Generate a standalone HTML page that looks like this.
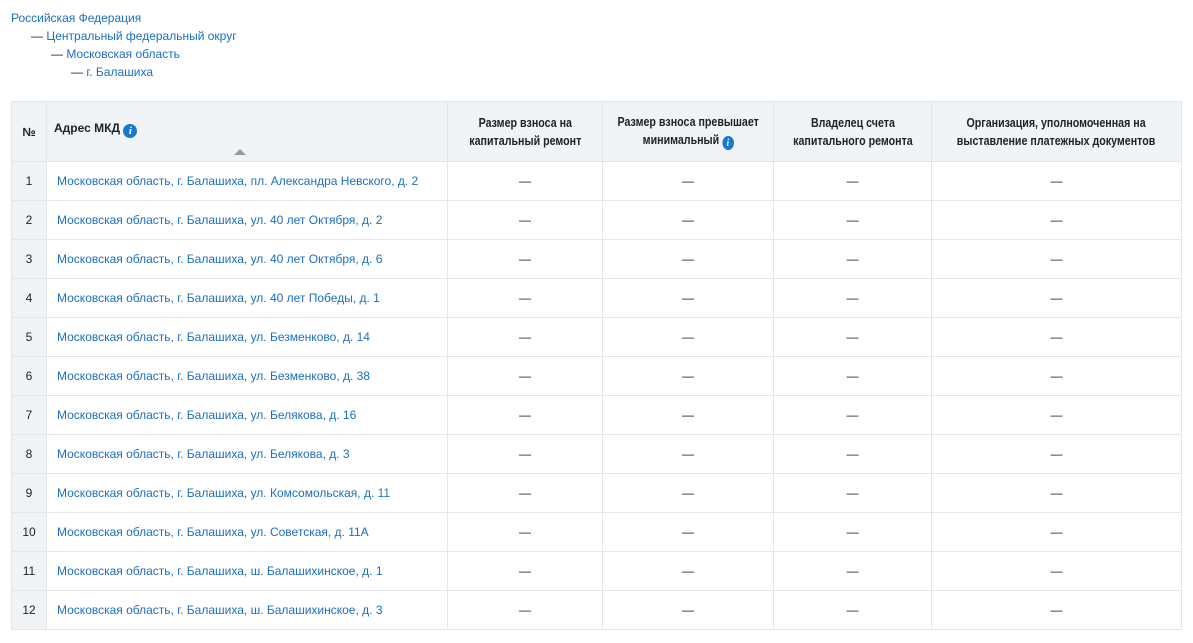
<!DOCTYPE html>
<html><head><meta charset="utf-8"><style>
body{margin:0;background:#fff;font-family:"Liberation Sans",sans-serif;font-size:12px;color:#222}
a{color:#1b6fc2;text-decoration:none}
.tree{position:absolute;left:11px;top:9px;line-height:18px}
.tree div span{color:#222}
table{position:absolute;left:11px;top:101px;border-collapse:collapse;table-layout:fixed;width:1170px}
td,th{border:1px solid #e3e7eb;padding:0}
th{background:#f1f4f7;height:59px;font-size:12px;font-weight:bold;line-height:18px;text-align:center;color:#222;overflow:hidden}
th .h{height:59px;display:flex;align-items:center;justify-content:center;white-space:nowrap}
th .h span.t{display:inline-block;font-size:13px;transform:scaleX(0.82);transform-origin:center}
td{height:38px;text-align:center}
td.n{background:#f1f4f7}
td.a{text-align:left;padding-left:10px}
.i{display:inline-block;width:14px;height:14px;border-radius:50%;background:#1b78d0;color:#fff;font:italic bold 11px/14px "Liberation Serif",serif;text-align:center;vertical-align:-2px}
.tri{position:absolute;left:187px;top:47px;width:0;height:0;border-left:6px solid transparent;border-right:6px solid transparent;border-bottom:6px solid #999}
</style></head><body>
<div class="tree">
<div><a>Российская Федерация</a></div>
<div style="padding-left:20px"><span>— </span><a>Центральный федеральный округ</a></div>
<div style="padding-left:40px"><span>— </span><a>Московская область</a></div>
<div style="padding-left:60px"><span>— </span><a>г. Балашиха</a></div>
</div>
<table>
<colgroup><col style="width:35px"><col style="width:401px"><col style="width:155px"><col style="width:171px"><col style="width:158px"><col style="width:250px"></colgroup>
<tr><th><div class="h">№</div></th><th style="text-align:left;position:relative;vertical-align:top"><div style="height:59px;padding:17px 0 0 7px;box-sizing:border-box">Адрес МКД <span class="i">i</span></div><div class="tri"></div></th>
<th><div class="h"><span class="t">Размер взноса на<br>капитальный ремонт</span></div></th><th><div class="h"><span class="t">Размер взноса превышает<br>минимальный <span class="i">i</span></span></div></th><th><div class="h"><span class="t">Владелец счета<br>капитального ремонта</span></div></th><th><div class="h"><span class="t">Организация, уполномоченная на<br>выставление платежных документов</span></div></th></tr>
<tr><td class="n">1</td><td class="a"><a>Московская область, г. Балашиха, пл. Александра Невского, д. 2</a></td><td>—</td><td>—</td><td>—</td><td>—</td></tr>
<tr><td class="n">2</td><td class="a"><a>Московская область, г. Балашиха, ул. 40 лет Октября, д. 2</a></td><td>—</td><td>—</td><td>—</td><td>—</td></tr>
<tr><td class="n">3</td><td class="a"><a>Московская область, г. Балашиха, ул. 40 лет Октября, д. 6</a></td><td>—</td><td>—</td><td>—</td><td>—</td></tr>
<tr><td class="n">4</td><td class="a"><a>Московская область, г. Балашиха, ул. 40 лет Победы, д. 1</a></td><td>—</td><td>—</td><td>—</td><td>—</td></tr>
<tr><td class="n">5</td><td class="a"><a>Московская область, г. Балашиха, ул. Безменково, д. 14</a></td><td>—</td><td>—</td><td>—</td><td>—</td></tr>
<tr><td class="n">6</td><td class="a"><a>Московская область, г. Балашиха, ул. Безменково, д. 38</a></td><td>—</td><td>—</td><td>—</td><td>—</td></tr>
<tr><td class="n">7</td><td class="a"><a>Московская область, г. Балашиха, ул. Белякова, д. 16</a></td><td>—</td><td>—</td><td>—</td><td>—</td></tr>
<tr><td class="n">8</td><td class="a"><a>Московская область, г. Балашиха, ул. Белякова, д. 3</a></td><td>—</td><td>—</td><td>—</td><td>—</td></tr>
<tr><td class="n">9</td><td class="a"><a>Московская область, г. Балашиха, ул. Комсомольская, д. 11</a></td><td>—</td><td>—</td><td>—</td><td>—</td></tr>
<tr><td class="n">10</td><td class="a"><a>Московская область, г. Балашиха, ул. Советская, д. 11А</a></td><td>—</td><td>—</td><td>—</td><td>—</td></tr>
<tr><td class="n">11</td><td class="a"><a>Московская область, г. Балашиха, ш. Балашихинское, д. 1</a></td><td>—</td><td>—</td><td>—</td><td>—</td></tr>
<tr><td class="n">12</td><td class="a"><a>Московская область, г. Балашиха, ш. Балашихинское, д. 3</a></td><td>—</td><td>—</td><td>—</td><td>—</td></tr>
</table>
</body></html>
